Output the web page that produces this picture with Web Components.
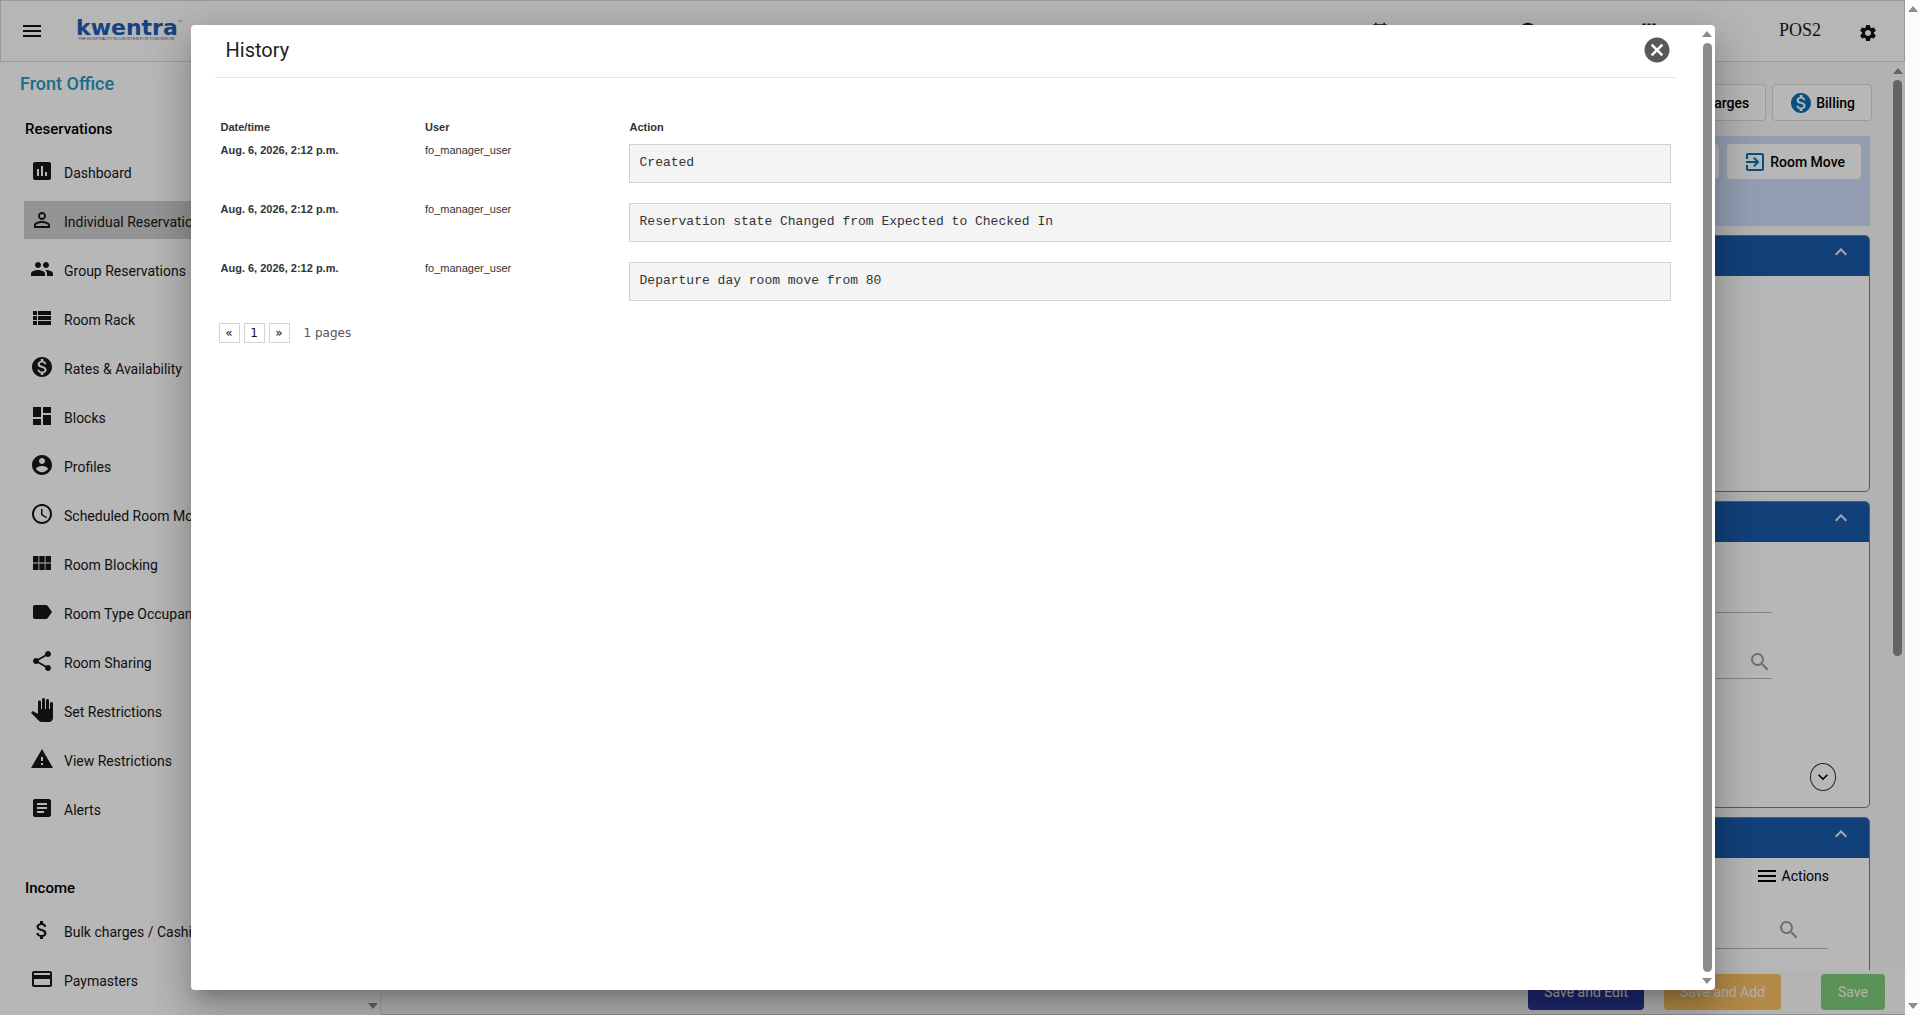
<!DOCTYPE html>
<html lang="en">
<head>
<meta charset="utf-8">
<title>Kwentra – Front Office</title>
<style>
  html, body { margin: 0; height: 100%; overflow: hidden; }
  body { font-family: Roboto, "Liberation Sans", sans-serif; font-size: 14px; line-height: 20px; color: #171717; background: #fcfcfc; }
</style>
</head>
<body>
<kw-app>
  <kw-header slot="header"></kw-header>
  <kw-sidebar slot="side"></kw-sidebar>
  <kw-workspace slot="main"></kw-workspace>
  <kw-dialog slot="dialog">
    <span slot="title">History</span>
    <kw-history></kw-history>
  </kw-dialog>
</kw-app>
<script>
const ICONS = {
  menu: '<path d="M3 18h18v-2H3v2zm0-5h18v-2H3v2zm0-7v2h18V6H3z"/>',
  assessment: '<path d="M19 3H5c-1.1 0-2 .9-2 2v14c0 1.100.9 2 2 2h14c1.100 0 2-.9 2-2V5c0-1.100-.9-2-2-2zM9 17H7v-7h2v7zm4 0h-2V7h2v10zm4 0h-2v-4h2v4z"/>',
  person: '<path d="M12 5.900a2.100 2.100 0 110 4.200 2.100 2.100 0 010-4.200m0 9c2.970 0 6.100 1.460 6.100 2.100v1.100H5.900V17c0-.64 3.130-2.100 6.100-2.100M12 4C9.790 4 8 5.790 8 8s1.790 4 4 4 4-1.790 4-4-1.790-4-4-4zm0 9c-2.670 0-8 1.340-8 4v3h16v-3c0-2.660-5.330-4-8-4z"/>',
  group: '<path d="M16 11c1.660 0 2.990-1.340 2.990-3S17.660 5 16 5s-3 1.340-3 3 1.340 3 3 3zm-8 0c1.660 0 2.990-1.340 2.990-3S9.660 5 8 5 5 6.340 5 8s1.340 3 3 3zm0 2c-2.330 0-7 1.170-7 3.500V19h14v-2.500c0-2.330-4.670-3.500-7-3.500zm8 0c-.29 0-.62.020-.97.050 1.160.840 1.970 1.970 1.970 3.450V19h6v-2.500c0-2.330-4.670-3.500-7-3.500z"/>',
  list: '<path d="M3 14h4v-4H3v4zm0 5h4v-4H3v4zM3 9h4V5H3v4zm5 5h13v-4H8v4zm0 5h13v-4H8v4zM8 5v4h13V5H8z"/>',
  paid: '<path d="M12 2C6.480 2 2 6.480 2 12s4.480 10 10 10 10-4.480 10-10S17.520 2 12 2zm1.410 16.090V20h-2.670v-1.930c-1.710-.36-3.160-1.460-3.270-3.400h1.960c.1 1.050.820 1.870 2.650 1.870 1.960 0 2.400-.98 2.400-1.590 0-.83-.44-1.610-2.670-2.140-2.480-.6-4.180-1.620-4.180-3.670 0-1.720 1.390-2.840 3.110-3.210V4h2.670v1.950c1.860.45 2.790 1.860 2.850 3.390H14.300c-.05-1.110-.64-1.870-2.220-1.870-1.500 0-2.400.68-2.400 1.640 0 .84.65 1.390 2.670 1.910s4.180 1.390 4.180 3.910c-.01 1.830-1.380 2.830-3.120 3.160z"/>',
  dashboard: '<path d="M3 13h8V3H3v10zm0 8h8v-6H3v6zm10 0h8V11h-8v10zm0-18v6h8V3h-8z"/>',
  account: '<path d="M12 2C6.480 2 2 6.480 2 12s4.480 10 10 10 10-4.480 10-10S17.520 2 12 2zm0 3c1.660 0 3 1.340 3 3s-1.340 3-3 3-3-1.340-3-3 1.340-3 3-3zm0 14.200c-2.500 0-4.710-1.280-6-3.220.030-1.990 4-3.080 6-3.080 1.990 0 5.970 1.090 6 3.080-1.290 1.940-3.500 3.220-6 3.220z"/>',
  clock: '<path d="M11.990 2C6.470 2 2 6.480 2 12s4.470 10 9.990 10C17.520 22 22 17.520 22 12S17.520 2 11.990 2zM12 20c-4.420 0-8-3.580-8-8s3.580-8 8-8 8 3.580 8 8-3.580 8-8 8zm.5-13H11v6l5.250 3.150.75-1.230-4.500-2.670z"/>',
  module: '<path d="M3 11.500h5.500V5H3v6.500zm0 7.500h5.500v-6.500H3V19zm6.300 0h5.400v-6.500H9.300V19zm6.200 0H21v-6.500h-5.500V19zm-6.200-7.500h5.400V5H9.300v6.500zM15.500 5v6.500H21V5h-5.500z"/>',
  label: '<path d="M17.630 5.840C17.270 5.330 16.670 5 16 5L5 5.010C3.900 5.010 3 5.900 3 7v10c0 1.100.9 1.990 2 1.990L16 19c.67 0 1.270-.33 1.630-.84L22 12l-4.370-6.160z"/>',
  share: '<path d="M18 16.080c-.76 0-1.440.3-1.960.77L8.910 12.700c.05-.23.090-.46.090-.7s-.04-.47-.09-.7l7.050-4.110c.54.5 1.250.81 2.040.81 1.660 0 3-1.340 3-3s-1.340-3-3-3-3 1.340-3 3c0 .24.040.47.090.7L8.040 9.810C7.500 9.310 6.790 9 6 9c-1.660 0-3 1.340-3 3s1.340 3 3 3c.79 0 1.500-.31 2.040-.81l7.120 4.160c-.05.21-.08.43-.08.650 0 1.610 1.310 2.920 2.920 2.920s2.920-1.310 2.920-2.920-1.310-2.920-2.920-2.920z"/>',
  hand: '<path d="M23 5.500V20c0 2.200-1.800 4-4 4h-7.300c-1.080 0-2.100-.43-2.850-1.190L1 14.830s1.260-1.230 1.300-1.250c.22-.19.490-.29.790-.29.220 0 .42.060.6.160.040.010 4.310 2.460 4.310 2.460V4c0-.83.67-1.500 1.500-1.500S11 3.170 11 4v7h1V1.500c0-.83.67-1.500 1.500-1.500S15 .67 15 1.500V11h1V2.500c0-.83.67-1.500 1.500-1.500s1.500.67 1.500 1.500V11h1V5.500c0-.83.67-1.500 1.500-1.500s1.500.67 1.500 1.500z"/>',
  warning: '<path d="M1 21h22L12 2 1 21zm12-3h-2v-2h2v2zm0-4h-2v-4h2v4z"/>',
  article: '<path d="M19 3H5c-1.100 0-2 .9-2 2v14c0 1.100.9 2 2 2h14c1.100 0 2-.9 2-2V5c0-1.100-.9-2-2-2zm-5 14H7v-2h7v2zm3-4H7v-2h10v2zm0-4H7V7h10v2z"/>',
  money: '<path d="M11.800 10.900c-2.270-.59-3-1.200-3-2.150 0-1.090 1.010-1.850 2.700-1.850 1.780 0 2.440.85 2.500 2.100h2.210c-.07-1.720-1.120-3.300-3.210-3.810V3h-3v2.160c-1.940.42-3.500 1.680-3.500 3.610 0 2.310 1.910 3.460 4.700 4.130 2.500.6 3 1.480 3 2.410 0 .69-.49 1.790-2.700 1.790-2.060 0-2.870-.92-2.980-2.100h-2.200c.12 2.190 1.760 3.420 3.680 3.830V21h3v-2.150c1.950-.37 3.500-1.500 3.500-3.550 0-2.840-2.430-3.810-4.700-4.400z"/>',
  card: '<path d="M20 4H4c-1.110 0-1.990.89-1.990 2L2 18c0 1.110.89 2 2 2h16c1.110 0 2-.89 2-2V6c0-1.110-.89-2-2-2zm0 14H4v-6h16v6zm0-10H4V6h16v2z"/>',
  settings: '<path d="M19.140 12.940c.04-.3.060-.61.060-.94s-.02-.64-.07-.94l2.030-1.580a.49.49 0 00.12-.61l-1.920-3.320a.488.488 0 00-.59-.22l-2.390.96c-.5-.38-1.030-.7-1.620-.94l-.36-2.540a.484.484 0 00-.48-.41h-3.840c-.24 0-.43.170-.47.410l-.36 2.540c-.59.24-1.130.57-1.620.94l-2.390-.96c-.22-.08-.47 0-.59.22L2.740 8.870c-.12.210-.08.470.12.610l2.030 1.580c-.05.3-.09.630-.09.940s.02.640.07.940l-2.030 1.580a.49.49 0 00-.12.610l1.920 3.320c.12.220.37.290.59.220l2.390-.96c.5.380 1.030.7 1.620.94l.36 2.540c.05.240.24.410.48.410h3.840c.24 0 .44-.17.470-.41l.36-2.540c.59-.24 1.130-.56 1.620-.94l2.390.96c.22.080.47 0 .59-.22l1.920-3.320c.12-.22.070-.47-.12-.61l-2.010-1.580zM12 15.600c-1.980 0-3.600-1.620-3.600-3.600s1.620-3.600 3.600-3.600 3.600 1.620 3.600 3.600-1.620 3.600-3.600 3.600z"/>',
  login: '<path d="M10.090 15.590L11.500 17l5-5-5-5-1.410 1.410L12.670 11H3v2h9.670l-2.580 2.590zM19 3H5c-1.110 0-2 .9-2 2v4h2V5h14v14H5v-4H3v4c0 1.100.89 2 2 2h14c1.100 0 2-.9 2-2V5c0-1.100-.9-2-2-2z"/>',
  up: '<path d="M12 8l-6 6 1.410 1.410L12 10.830l4.590 4.580L18 14z"/>',
  down: '<path d="M16.590 8.590L12 13.170 7.410 8.590 6 10l6 6 6-6z"/>',
  search: '<path d="M15.500 14h-.79l-.28-.27A6.471 6.471 0 0016 9.500 6.500 6.500 0 109.500 16c1.610 0 3.090-.59 4.230-1.570l.27.280v.79l5 4.990L20.490 19l-4.990-5zm-6 0C7.010 14 5 11.990 5 9.500S7.010 5 9.500 5 14 7.010 14 9.500 11.990 14 9.500 14z"/>',
  cancel: '<path d="M12 2C6.470 2 2 6.470 2 12s4.470 10 10 10 10-4.470 10-10S17.530 2 12 2zm5 13.590L15.590 17 12 13.410 8.410 17 7 15.590 10.590 12 7 8.410 8.410 7 12 10.590 15.590 7 17 8.410 13.410 12 17 15.590z"/>',
  event: '<path d="M19 4h-1V2h-2v2H8V2H6v2H5c-1.100 0-2 .9-2 2v14c0 1.100.9 2 2 2h14c1.100 0 2-.9 2-2V6c0-1.100-.9-2-2-2zm0 16H5V9h14v11z"/>',
  bars: '<path d="M4 3h4v18H4zm6 0h4v18h-4zm6 0h4v18h-4z"/>'
};

function define(name, html, setup) {
  const template = document.createElement('template');
  template.innerHTML = html;
  customElements.define(name, class extends HTMLElement {
    connectedCallback() {
      if (this.shadowRoot) return;
      this.attachShadow({ mode: 'open' }).append(template.content.cloneNode(true));
      if (setup) setup(this, this.shadowRoot);
    }
  });
}

define('kw-icon', `
<style>
  :host { display: block; flex: none; width: var(--size, 24px); height: var(--size, 24px); }
  svg { display: block; width: 100%; height: 100%; fill: currentColor; }
</style>
<svg viewBox="0 0 24 24" aria-hidden="true"></svg>`,
(host, root) => { root.querySelector('svg').innerHTML = ICONS[host.getAttribute('name')]; });

define('kw-scrollbar', `
<style>
  :host { display: flex; flex-direction: column; align-items: center; flex: none; width: 15px; box-sizing: border-box; padding: 6px 0; --c: #8b8b8b; }
  i { width: 0; height: 0; border: solid transparent; border-width: 0 5px 6px; border-bottom-color: var(--c); }
  i:last-child { border-width: 6px 5px 0; border-top-color: var(--c); visibility: var(--end-arrow, visible); }
  div { flex: 1; width: 9px; margin: 6px 0; }
  b { display: block; height: var(--thumb, 0); border-radius: 5px; background: var(--c); }
</style>
<i></i><div><b></b></div><i></i>`);

define('kw-app', `
<style>
  :host { display: flex; height: 100vh; }
  .app { position: relative; flex: 1; min-width: 0; display: flex; flex-direction: column; background: #f8f8f8; overflow: hidden; }
  .body { flex: 1; min-height: 0; display: flex; }
  ::slotted([slot=main]) { flex: 1; }
  .backdrop { position: absolute; inset: 0; background: rgba(0,0,0,.28); display: flex; align-items: center; justify-content: center; }
</style>
<div class="app">
  <slot name="header"></slot>
  <div class="body"><slot name="side"></slot><slot name="main"></slot></div>
  <div class="backdrop"><slot name="dialog"></slot></div>
</div>
<kw-scrollbar></kw-scrollbar>`);

define('kw-header', `
<style>
  :host { display: flex; align-items: center; flex: none; height: 62px; box-sizing: border-box; border: 1px solid #d6d6d6; padding: 0 26px 0 19px; background: #fdfdfd; }
  button { border: 0; padding: 0; background: none; color: #111; }
  .logo { margin-left: 32px; color: #205cb4; text-decoration: none; }
  .logo strong { display: flex; align-items: flex-start; font: 700 22px/16px "DejaVu Sans", sans-serif; }
  .logo sup { font: 4px/4px "Liberation Sans", sans-serif; }
  .logo small { display: block; padding-left: 2px; font: 4px/6px "Liberation Sans", sans-serif; color: #557; white-space: nowrap; }
  nav { flex: 1; display: flex; justify-content: flex-end; color: #222; --size: 20px; }
  nav a { color: inherit; width: 121px; }
  nav a:first-child { width: 148px; }
  nav a:last-child { width: 45px; }
  .pos { width: 137px; padding-bottom: 3px; text-align: right; font: 18px/20px "Liberation Serif", serif; }
  .set { margin: 4px 0 0 37px; --size: 20px; }
</style>
<button aria-label="Menu"><kw-icon name="menu"></kw-icon></button>
<a class="logo" href="#"><strong>kwentra<sup>™</sup></strong><small>THE HOSPITALITY ECOSYSTEM FOR TOMORROW</small></a>
<nav>
  <a href="#" aria-label="Calendar"><kw-icon name="event"></kw-icon></a>
  <a href="#" aria-label="Account"><kw-icon name="account"></kw-icon></a>
  <a href="#" aria-label="Reports"><kw-icon name="bars"></kw-icon></a>
</nav>
<span class="pos">POS2</span>
<button class="set" aria-label="Settings"><kw-icon name="settings"></kw-icon></button>`);

define('kw-nav-item', `
<style>
  :host { display: block; }
  a { display: flex; align-items: center; gap: 10px; height: 38px; padding-left: 6px; color: #171717; text-decoration: none; white-space: nowrap; }
  :host([active]) a { background: #cecece; }
  span { padding-top: 3px; }
</style>
<a href="#"><kw-icon></kw-icon><span><slot></slot></span></a>`,
(host, root) => {
  const icon = document.createElement('kw-icon');
  icon.setAttribute('name', host.getAttribute('icon'));
  root.querySelector('kw-icon').replaceWith(icon);
});

define('kw-nav-group', `
<style>
  :host { display: block; }
  h2 { margin: 0 0 13px 1px; font: 500 15px/20px Roboto, sans-serif; color: #000; }
  div { display: flex; flex-direction: column; gap: 11px; }
</style>
<h2></h2><div><slot></slot></div>`,
(host, root) => { root.querySelector('h2').textContent = host.getAttribute('heading'); });

define('kw-sidebar', `
<style>
  :host { display: flex; flex: none; width: 381px; box-sizing: border-box; border-right: 1px solid #e4e4e4; background: #fefefe; overflow: hidden; }
  .list { flex: 1; padding: 10px 0 0 24px; }
  h1 { margin: 0 0 23px -4px; font: 500 18px/24px Roboto, sans-serif; color: #2496bd; }
  kw-nav-group { margin-bottom: 51px; }
</style>
<div class="list">
  <h1>Front Office</h1>
  <kw-nav-group heading="Reservations">
    <kw-nav-item icon="assessment">Dashboard</kw-nav-item>
    <kw-nav-item icon="person" active>Individual Reservations</kw-nav-item>
    <kw-nav-item icon="group">Group Reservations</kw-nav-item>
    <kw-nav-item icon="list">Room Rack</kw-nav-item>
    <kw-nav-item icon="paid">Rates &amp; Availability</kw-nav-item>
    <kw-nav-item icon="dashboard">Blocks</kw-nav-item>
    <kw-nav-item icon="account">Profiles</kw-nav-item>
    <kw-nav-item icon="clock">Scheduled Room Moves</kw-nav-item>
    <kw-nav-item icon="module">Room Blocking</kw-nav-item>
    <kw-nav-item icon="label">Room Type Occupancy</kw-nav-item>
    <kw-nav-item icon="share">Room Sharing</kw-nav-item>
    <kw-nav-item icon="hand">Set Restrictions</kw-nav-item>
    <kw-nav-item icon="warning">View Restrictions</kw-nav-item>
    <kw-nav-item icon="article">Alerts</kw-nav-item>
  </kw-nav-group>
  <kw-nav-group heading="Income">
    <kw-nav-item icon="money">Bulk charges / Cashiering</kw-nav-item>
    <kw-nav-item icon="card">Paymasters</kw-nav-item>
  </kw-nav-group>
</div>
<kw-scrollbar></kw-scrollbar>`);

define('kw-button', `
<style>
  :host { display: block; }
  button { display: flex; align-items: center; gap: 3px; height: 37px; padding: 0 16px; border: 1px solid #d8d8d8; border-radius: 4px; background: #fefefe; font: 500 14px/20px Roboto, sans-serif; color: #000; }
  ::slotted(kw-icon) { color: #0a70b0; }
</style>
<button><slot name="icon"></slot><slot></slot></button>`);

define('kw-panel', `
<style>
  :host { display: flex; flex-direction: column; box-sizing: border-box; border: 1px solid #3c8ccc; border-radius: 5px; background: #fefefe; overflow: hidden; }
  header { flex: none; display: flex; justify-content: flex-end; align-items: flex-start; height: 40px; box-sizing: border-box; padding: 4px 16px; background: #1a5ba9; }
  button { border: 0; padding: 0; background: none; color: #e4ecf6; }
</style>
<header><button aria-label="Collapse section"><kw-icon name="up"></kw-icon></button></header>
<slot></slot>`);

define('kw-field', `
<style>
  :host { display: flex; align-items: center; box-sizing: border-box; border-bottom: 1px solid #b4b4b4; height: 37px; padding: var(--drop, 0) var(--end, 0) 0 0; color: #999; }
  input { flex: 1; min-width: 0; border: 0; outline: 0; background: none; font: 14px/20px Roboto, sans-serif; }
</style>
<input type="text"><slot></slot>`,
(host, root) => root.querySelector('input').setAttribute('aria-label', host.getAttribute('label')));

define('kw-workspace', `
<style>
  :host { display: flex; flex-direction: column; min-width: 0; background: #f7f7f7; }
  .scroll { flex: 1; min-height: 0; display: flex; overflow: hidden; }
  main { flex: 1; min-width: 0; padding: 22px 20px 0 20px; display: flex; flex-direction: column; gap: 9px; overflow: hidden; }
  .tools, .band { flex: none; display: flex; justify-content: flex-end; gap: 6px; }
  .tools { margin: 0 -2px 6px 0; }
  .band { height: 90px; box-sizing: border-box; padding: 7px 8px; background: #cddcf8; }
  kw-panel { flex: none; }
  .one { height: 257px; }
  .two { height: 307px; }
  .three { height: 306px; }
  .fields { flex: 1; display: flex; flex-direction: column; gap: 29px; padding: 34px 97px 0 40px; --drop: 4px; }
  .more { align-self: flex-end; display: flex; align-items: center; justify-content: center; width: 26px; height: 28px; margin: 0 33px 16px 0; padding: 0; border: 1px solid #333; border-radius: 50%; background: none; color: #000; --size: 20px; }
  .actions { align-self: flex-end; display: flex; align-items: center; gap: 3px; margin: 6px 40px 0 0; padding: 0; border: 0; background: none; font: 14px/24px Roboto, sans-serif; color: #000; }
  .three kw-field { margin: 24px 41px 0 40px; --end: 27px; }
  kw-scrollbar { --thumb: 66%; --end-arrow: hidden; }
  footer { flex: none; display: flex; align-items: center; justify-content: flex-end; height: 45px; padding-right: 20px; box-sizing: border-box; border-bottom: 1px solid #c8c8c8; background: #fafafa; }
  footer button { height: 36px; padding: 0 16px; border: 0; border-radius: 4px; font: 14px/36px Roboto, sans-serif; color: #f4f4f4; }
  .edit { background: #2c3a9b; } .add { background: #f9bf63; margin-left: 20px; } footer .save { background: #7ecb77; margin-left: 40px; padding: 0 17px; }
</style>
<div class="scroll">
  <main>
    <div class="tools">
      <kw-button>Charges</kw-button>
      <kw-button><kw-icon slot="icon" name="paid"></kw-icon>Billing</kw-button>
    </div>
    <div class="band">
      <kw-button>Print</kw-button>
      <kw-button><kw-icon slot="icon" name="login"></kw-icon>Room Move</kw-button>
    </div>
    <kw-panel class="one"></kw-panel>
    <kw-panel class="two">
      <div class="fields"><kw-field label="Name"></kw-field><kw-field label="Lookup"><kw-icon name="search"></kw-icon></kw-field></div>
      <button class="more" aria-label="Show more"><kw-icon name="down"></kw-icon></button>
    </kw-panel>
    <kw-panel class="three">
      <button class="actions"><kw-icon name="menu"></kw-icon>Actions</button>
      <kw-field label="Search"><kw-icon name="search"></kw-icon></kw-field>
    </kw-panel>
  </main>
  <kw-scrollbar></kw-scrollbar>
</div>
<footer>
  <button class="edit">Save and Edit</button>
  <button class="add">Save and Add</button>
  <button class="save">Save</button>
</footer>`);

define('kw-dialog', `
<style>
  :host { display: flex; width: 80%; height: 95%; background: #fff; border-radius: 4px; box-shadow: 0 11px 15px -7px rgba(0,0,0,.2), 0 24px 38px 3px rgba(0,0,0,.14), 0 9px 46px 8px rgba(0,0,0,.12); overflow: hidden; }
  section { flex: 1; min-width: 0; padding: 0 24px; }
  header { display: flex; align-items: center; justify-content: space-between; height: 53px; box-sizing: border-box; padding: 0 4px 3px 11px; border-bottom: 1px solid #e6e6e6; }
  h2 { margin: 0; font: 400 20px/24px Roboto, sans-serif; color: #222; }
  button { border: 0; padding: 0; background: none; color: #585858; --size: 30px; }
  kw-scrollbar { --thumb: 100%; }
</style>
<section role="dialog" aria-label="History">
  <header><h2><slot name="title"></slot></h2><button aria-label="Close"><kw-icon name="cancel"></kw-icon></button></header>
  <slot></slot>
</section>
<kw-scrollbar></kw-scrollbar>`);

define('kw-history', `
<style>
  :host { display: block; padding-top: 40px; font: 11px/14px "Liberation Sans", sans-serif; color: #333; }
  table { width: 100%; table-layout: fixed; border-collapse: collapse; }
  col.c { width: 14%; }
  th, td { text-align: left; vertical-align: top; padding: 2px 5px 0 6px; }
  thead th { padding: 2px 5px 7px 6px; }
  pre { margin: 1px 0 17px -1px; height: 39px; box-sizing: border-box; padding: 10px; border: 1px solid #d2d2d2; background: #f4f4f4; font: 13px/16px "Liberation Mono", monospace; }
  nav { display: flex; align-items: center; gap: 4px; padding: 5px 4px; font: 12px/18px "DejaVu Sans", sans-serif; color: #555; }
  button { width: 21px; height: 20px; padding: 0; border: 1px solid #d4d4d4; background: #fff; font: inherit; color: #111; }
  nav span { margin-left: 10px; }
</style>
<table>
  <colgroup><col class="c"><col class="c"><col></colgroup>
  <thead><tr><th scope="col">Date/time</th><th scope="col">User</th><th scope="col">Action</th></tr></thead>
  <tbody>
    <tr><th scope="row">Aug. 6, 2026, 2:12 p.m.</th><td>fo_manager_user</td><td><pre>Created</pre></td></tr>
    <tr><th scope="row">Aug. 6, 2026, 2:12 p.m.</th><td>fo_manager_user</td><td><pre>Reservation state Changed from Expected to Checked In</pre></td></tr>
    <tr><th scope="row">Aug. 6, 2026, 2:12 p.m.</th><td>fo_manager_user</td><td><pre>Departure day room move from 80</pre></td></tr>
  </tbody>
</table>
<nav aria-label="Pages"><button aria-label="Previous">«</button><button>1</button><button aria-label="Next">»</button><span>1 pages</span></nav>`);
</script>
</body>
</html>
